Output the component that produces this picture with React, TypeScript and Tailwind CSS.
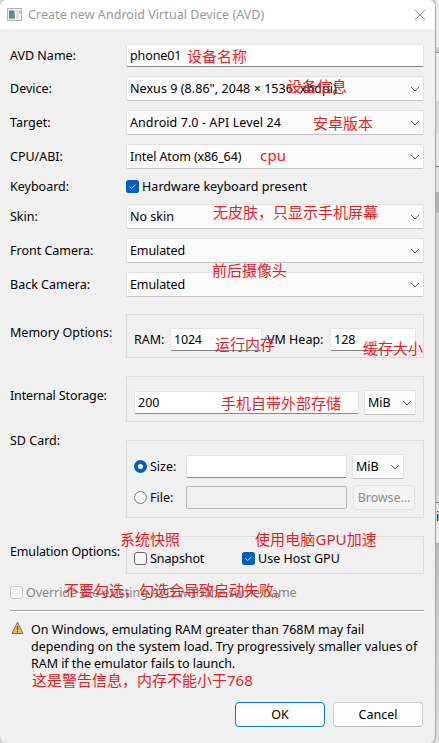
import type { ReactNode } from "react";

const Chevron = () => (
  <svg width="10" height="6" viewBox="0 0 10 6" fill="none" stroke="#6b6b6b" strokeWidth="1" className="shrink-0">
    <path d="M1 1 L5 5 L9 1" />
  </svg>
);

function Select({ children, className = "w-[298px]" }: { children: ReactNode; className?: string }) {
  return (
    <div className={`flex h-[25px] shrink-0 items-center justify-between rounded-[2px] border border-b-[#c4c4c4] border-[#e2e2e2] bg-[#fbfbfb] pr-[3px] pl-[3px] ${className}`}>
      {children}
      <Chevron />
    </div>
  );
}

function Field({ children, className }: { children?: ReactNode; className: string }) {
  return (
    <div className={`flex h-[23px] shrink-0 items-center rounded-[2px] border border-[#e4e4e4] border-b-[#858585] bg-white pl-[3px] ${className}`}>
      {children}
    </div>
  );
}

function Row({ label, className, children }: { label: string; className: string; children: ReactNode }) {
  return (
    <div className={`flex items-center ${className}`}>
      <div className="w-[116px] shrink-0 whitespace-nowrap">{label}</div>
      {children}
    </div>
  );
}

const Checked = () => (
  <svg width="13" height="13" viewBox="0 0 13 13" className="shrink-0">
    <rect width="13" height="13" rx="2.5" fill="#005fb8" />
    <path d="M3.5 6.5 L5.6 8.6 L9.5 4.7" fill="none" stroke="#dbeaf7" strokeWidth="1" />
  </svg>
);

const notes = [
  { text: "设备名称", pos: "left-[187px] top-[46px]" },
  { text: "设备信息", pos: "left-[287px] top-[76px]" },
  { text: "安卓版本", pos: "left-[313px] top-[113px]" },
  { text: "cpu", pos: "left-[260px] top-[145px] tracking-[0.2px]" },
  { text: "无皮肤，只显示手机屏幕", pos: "left-[213px] top-[202px]" },
  { text: "前后摄像头", pos: "left-[212px] top-[260px]" },
  { text: "运行内存", pos: "left-[215px] top-[334px]" },
  { text: "缓存大小", pos: "left-[363px] top-[338px]" },
  { text: "手机自带外部存储", pos: "left-[221px] top-[393px]" },
  { text: "系统快照", pos: "left-[120px] top-[529px]" },
  { text: "使用电脑GPU加速", pos: "left-[255px] top-[529px] tracking-[0.1px]" },
  { text: "不要勾选，勾选会导致启动失败。", pos: "left-[64px] top-[580px]" },
  { text: "这是警告信息，内存不能小于768", pos: "left-[32px] top-[670px]" },
];

export default function App() {
  return (
    <div className="relative flex h-[743px] w-[439px] overflow-hidden bg-[#d0d0d0] font-['Noto_Sans','Noto_Sans_CJK_SC',sans-serif] text-[12.5px] leading-[17px] text-black">
      <div className="flex h-[743px] w-[436px] shrink-0 flex-col overflow-hidden rounded-[7px] border-r border-[#a6a6a6] bg-[#f0f0f0]">
        <header className="flex h-[29px] shrink-0 items-center bg-white pr-[10px] pl-[7px] text-[#999]">
          <svg width="15" height="13" viewBox="0 0 15 13" className="mr-[6px] shrink-0">
            <rect x=".5" y=".5" width="14" height="12" fill="#f0f0f0" stroke="#b0b4b8" />
            <rect x="2" y="2.5" width="5.5" height="8" fill="#4f8aa0" />
            <path d="M2 8 L7.5 5 V10.5 H2Z" fill="#5d9a7c" />
            <rect x="9" y="2.5" width="2.5" height="8" fill="#dcdcdc" />
            <rect x="12" y="2.5" width="1.5" height="3" fill="#9cc7a2" />
          </svg>
          <span className="grow whitespace-nowrap tracking-[0.05px]">Create new Android Virtual Device (AVD)</span>
          <svg width="10" height="10" viewBox="0 0 10 10" stroke="#8f8f8f"><path d="M0 0 L10 10 M10 0 L0 10" /></svg>
        </header>
        <main className="flex grow flex-col pl-[10px]">
          <Row label="AVD Name:" className="mt-[15px] h-[23px]"><Field className="w-[298px] tracking-[-0.1px]">phone01</Field></Row>
          <Row label="Device:" className="mt-[9px] h-[25px]"><Select className="w-[298px] tracking-[0.06px]">Nexus 9 (8.86", 2048 × 1536: xhdpi)</Select></Row>
          <Row label="Target:" className="mt-[9px] h-[25px]"><Select className="w-[298px] tracking-[0.08px]">Android 7.0 - API Level 24</Select></Row>
          <Row label="CPU/ABI:" className="mt-[9px] h-[25px]"><Select className="w-[298px] tracking-[-0.1px]">Intel Atom (x86_64)</Select></Row>
          <Row label="Keyboard:" className="mt-[9px] h-[17px]"><Checked /><span className="ml-[3px] tracking-[0.05px]">Hardware keyboard present</span></Row>
          <Row label="Skin:" className="mt-[9px] h-[25px]"><Select>No skin</Select></Row>
          <Row label="Front Camera:" className="mt-[9px] h-[25px]"><Select className="w-[298px] tracking-[-0.1px]">Emulated</Select></Row>
          <Row label="Back Camera:" className="mt-[9px] h-[25px]"><Select className="w-[298px] tracking-[-0.1px]">Emulated</Select></Row>
          <div className="mt-[17px] flex h-[44px]">
            <div className="w-[116px] shrink-0 pt-[10px]">Memory Options:</div>
            <div className="flex w-[298px] items-center border border-[#dcdcdc] pt-[6px] pl-[7px]">
              <span className="w-[36px] shrink-0">RAM:</span>
              <Field className="w-[92px] tracking-[-0.2px]">1024</Field>
              <span className="ml-[5px] w-[63px] shrink-0 whitespace-nowrap">VM Heap:</span>
              <Field className="w-[86px]">128</Field>
            </div>
          </div>
          <div className="mt-[18px] flex h-[46px]">
            <div className="w-[116px] shrink-0 pt-[11px] tracking-[-0.12px]">Internal Storage:</div>
            <div className="flex w-[298px] items-center border border-[#dcdcdc] pt-[7px] pl-[7px]">
              <Field className="w-[225px]">200</Field>
              <Select className="ml-[5px] w-[52px]">MiB</Select>
            </div>
          </div>
          <div className="mt-[18px] flex h-[78px]">
            <div className="-mt-[8px] w-[116px] shrink-0">SD Card:</div>
            <div className="flex w-[298px] flex-col gap-[6px] border border-[#dcdcdc] pt-[13px] pl-[7px]">
              <div className="flex h-[25px] items-center">
                <span className="size-[13px] shrink-0 rounded-full border-4 border-[#005fb8] bg-white" />
                <span className="ml-[3px] w-[36px] shrink-0">Size:</span>
                <Field className="w-[161px]" />
                <Select className="ml-[5px] w-[52px]">MiB</Select>
              </div>
              <div className="flex h-[25px] items-center">
                <span className="size-[13px] shrink-0 rounded-full border border-[#777] bg-[#f5f5f5]" />
                <span className="ml-[3px] w-[36px] shrink-0">File:</span>
                <div className="h-[23px] w-[161px] rounded-[2px] border border-[#b8babd]" />
                <div className="ml-[6px] flex h-[25px] w-[62px] items-center justify-center rounded-[4px] border border-[#e0e0e0] bg-[#f4f4f4] tracking-[-0.1px] text-[#8c8c8c]">Browse...</div>
              </div>
            </div>
          </div>
          <div className="mt-[18px] flex h-[38px]">
            <div className="w-[116px] shrink-0 pt-[7px] tracking-[-0.15px] whitespace-nowrap">Emulation Options:</div>
            <div className="flex w-[298px] items-center border border-[#dcdcdc] pt-[7px] pl-[7px]">
              <span className="size-[13px] shrink-0 rounded-[3px] border border-[#666] bg-[#f5f5f5]" />
              <span className="ml-[3px] w-[92px] tracking-[-0.1px]">Snapshot</span>
              <Checked />
              <span className="ml-[3px]">Use Host GPU</span>
            </div>
          </div>
          <div className="mt-[10px] flex h-[17px] items-center whitespace-nowrap text-[#858585]">
            <span className="size-[13px] shrink-0 rounded-[3px] border border-[#c8c8c8] bg-[#f7f7f7]" />
            <span className="ml-[3px] tracking-[-0.06px]">Override the existing AVD with the same name</span>
          </div>
          <div className="mt-[9px] h-[2px] w-[414px] shrink-0 border-t border-[#a0a0a0] bg-white" />
          <div className="mt-[9px] flex">
            <svg width="13" height="14" viewBox="0 0 13 14" className="ml-[1px] shrink-0">
              <path d="M6.5 1 L12 12.5 H1 Z" fill="#f0b465" stroke="#77716a" />
              <path d="M6.5 5 V9 M6.5 10 V11.5" stroke="#5a4420" strokeWidth="1.1" />
            </svg>
            <p className="ml-[7px] whitespace-nowrap">
              On Windows, emulating RAM greater than 768M may fail<br />
              depending on the system load. Try progressively smaller values of<br />
              <span className="tracking-[-0.05px]">RAM if the emulator fails to launch.</span>
            </p>
          </div>
          <div className="mt-auto mb-[16px] flex gap-2 pl-[225px]">
            <button className="h-[25px] w-[90px] rounded-[4px] border border-[#0078d4] bg-[#fdfdfd]">OK</button>
            <button className="h-[25px] w-[90px] rounded-[4px] border border-[#d0d0d0] border-b-[#bcbcbc] bg-[#fdfdfd]">Cancel</button>
          </div>
        </main>
      </div>
      <div className="flex w-[3px] shrink-0 flex-col overflow-hidden">
        <div className="h-[47px] shrink-0 bg-[#ededed]" />
        <div className="h-[6px] shrink-0 border-b border-[#9a9a9a] bg-[#cfcfcf]" />
        <div className="h-[48px] shrink-0 bg-[#e9e9e9]" />
        <div className="h-[32px] shrink-0 bg-[#d9d9d9]" />
        <div className="h-[34px] shrink-0 border-b border-[#777] bg-[#e6e6e6]" />
        <div className="h-[25px] shrink-0 bg-[#e2e2e2]" />
        <div className="h-[21px] shrink-0 bg-[#b4b4b4]" />
        <div className="h-[290px] shrink-0 border-b border-[#777] bg-[#d3d3d3]" />
        <div className="h-[42px] shrink-0 border-b-2 border-[#b5b5b5] bg-[#eaeaea] pt-[5px]">i</div>
        <div className="grow bg-gradient-to-b from-[#bdbdbd] to-[#dedede]" />
      </div>
      {notes.map((n) => (
        <span key={n.text} className={`absolute text-[15px] leading-[20px] whitespace-nowrap text-[#ed1c24] ${n.pos}`}>{n.text}</span>
      ))}
    </div>
  );
}
